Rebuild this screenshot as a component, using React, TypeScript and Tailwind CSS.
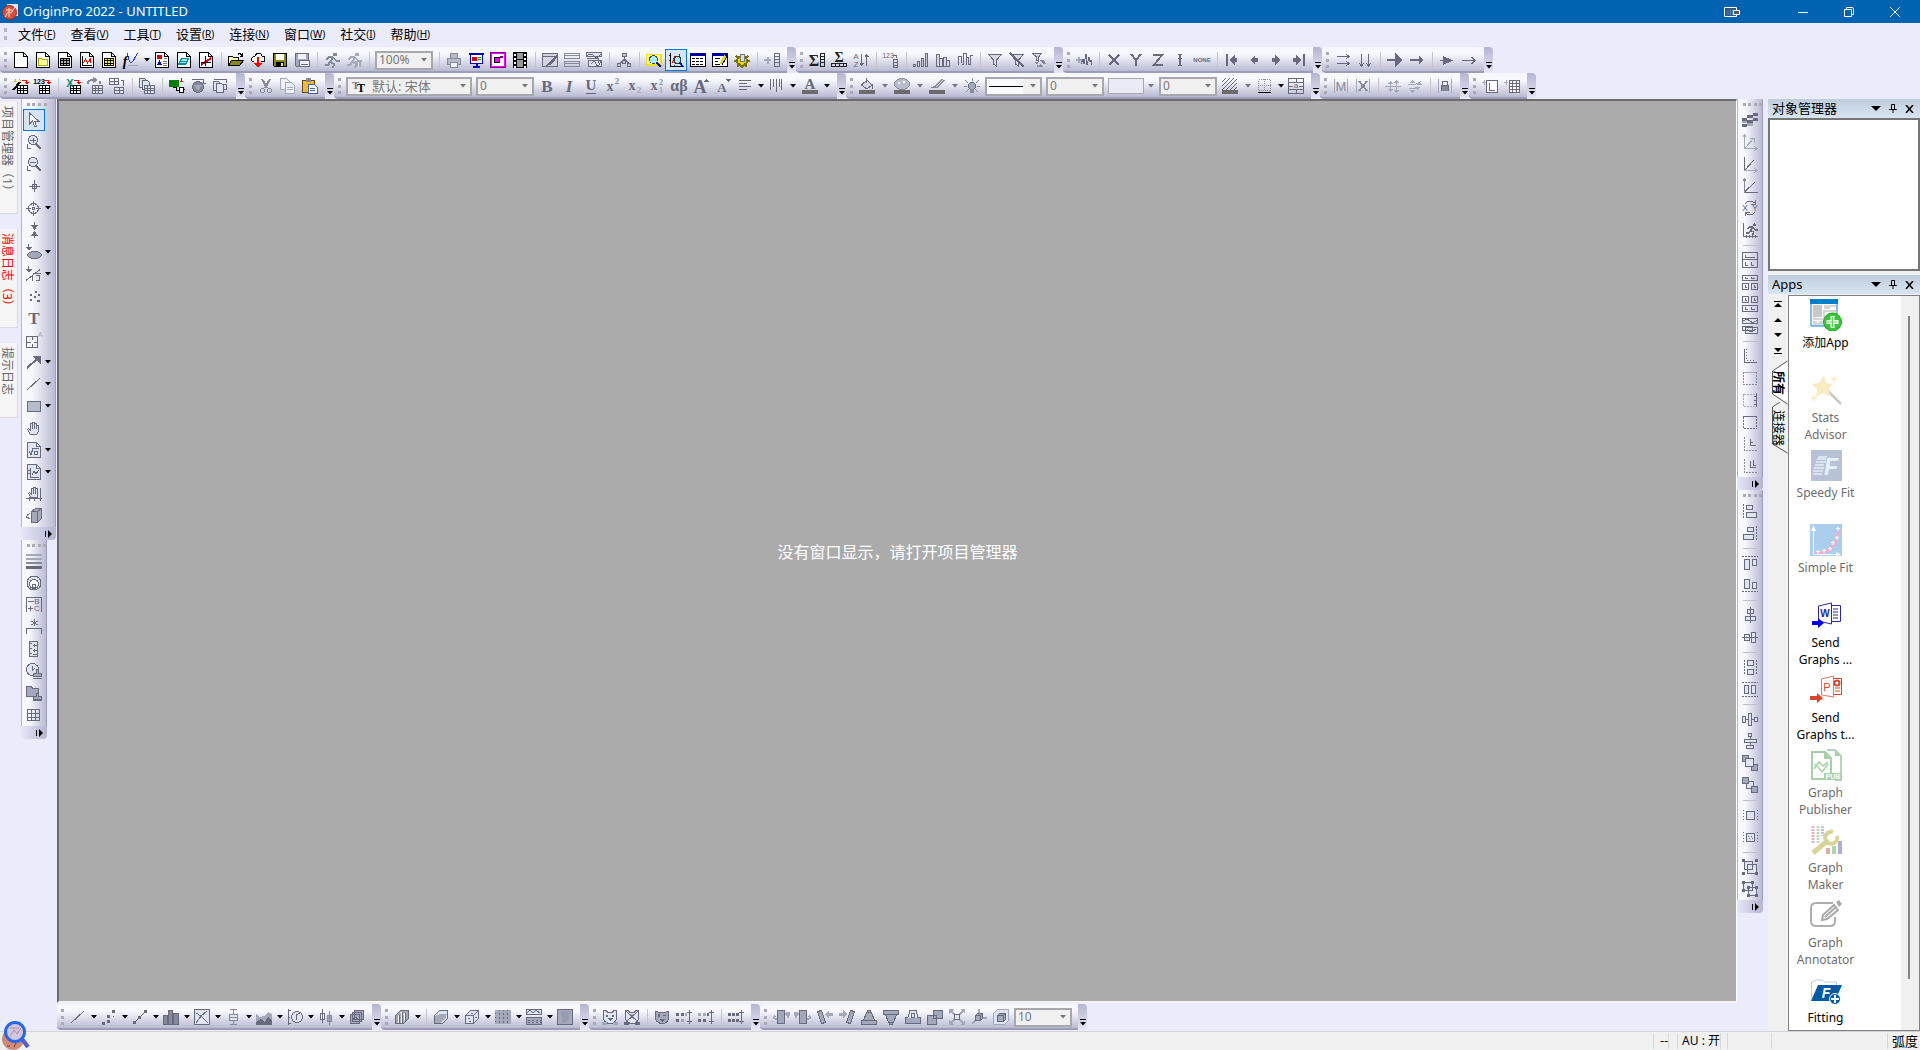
import type { ReactNode } from "react";

const LIGHT = "#a3a8ba";
const PALE = "#dfe4f3";

const txt = (s: string, x: number, y: number, size: number, extra: object = {}) => (
  <text x={x} y={y} fontSize={size} textAnchor="middle" fill="currentColor" stroke="none" fontWeight="bold" fontFamily="Liberation Serif, serif" {...extra}>
    {s}
  </text>
);
const sans = { fontFamily: "Liberation Sans, sans-serif", fontWeight: "normal" };
const line = (d: string, stroke = "currentColor", fill = "none", w = 1) => <path d={d} stroke={stroke} fill={fill} strokeWidth={w} />;
const solid = (d: string, fill = "currentColor") => <path d={d} stroke="none" fill={fill} />;
const page = (inner: ReactNode, stroke = "#000", fill = "#fff") => (
  <>
    {line("M1.5 .5h9l4 4v11h-13zM10.5 .5v4h4", stroke, fill)}
    {inner}
  </>
);
const grid = (x: number, y: number, fill = "#fff", stroke = "currentColor") =>
  line(`M${x}.5 ${y}.5h10v8h-10zM${x}.5 ${y + 3}.5h10M${x}.5 ${y + 5}.5h10M${x + 3}.5 ${y}.5v8M${x + 6}.5 ${y}.5v8`, stroke, fill);
const redHook = line("M9 2.5h4.500v3M11.500 4.500h4M12.500 5.500h2", "#f00");
const sheet = (x: number, y: number) => line(`M${x}.5 ${y}.5h5l2 2v7h-7z`, "currentColor", PALE);
const bin = (rects: string, guide: string) => (
  <>
    {line(rects, "currentColor", PALE)}
    <path d={guide} stroke="currentColor" strokeDasharray="2 1" />
  </>
);
const person = (c: string) => (
  <>
    <circle cx="11" cy="2.500" r="2" fill={c} stroke="none" />
    {line("M9.500 5 6 10l4 2-1 4M9 5 4.500 5 2.500 8M9.500 6l3 3h3M6 10 4 13H.5", c, "none", 2)}
  </>
);

const icons: Record<string, ReactNode> = {
  newProject: page(null),
  newFolder: page(line("M3.500 6.500h3l1 1h5v6h-9z", "#b9a500", "#ffffa0")),
  newBook: page(line("M3.500 6.500h9v7h-9zM3 8.500h10M3 11.500h10M6.500 6v8M9.500 6v8", "#000", "#b5b5b5")),
  newGraph: page(<>{line("M3.500 4v9.500H13", "#000")}{line("M4.500 11l2-4 2 4 3-4v4", "#e00000")}</>),
  newMatrix: page(line("M3.500 6.500h9v7h-9zM3 8.500h10M3 11.500h10M6.500 6v8M9.500 6v8", "#000", "#ff0")),
  fn: <>{line("M4.500 1c1 9 3 11 5.500 8s3-7 5-8", "#3b3bd8")}{txt("f", 2, 14, 14, { fill: "#000", fontStyle: "italic" })}{line("M5 13.500h10", LIGHT)}</>,
  newLayout: page(<>{solid("M3 3h5v4H3z", "#e00000")}{solid("M3 13l2.500-5L8 13z", "#0000d0")}{line("M9 9.500h4M9 11.500h4M9 13.500h4M10 6.500h3", "#777")}</>),
  newNotes: page(line("M5.500 6.500h7l-3 6h-7zM5 9h6M4 11h6", "#008a9a", "#9fe8f0")),
  newFn: page(<>{line("M3 13 13 6", "#e00000", "none", 2)}{line("M7.500 4v10M3 10.500h10", "#000")}</>),
  open: <>{line("M.5 13.500v-9h4l1 1h5v3", "#000", "#ffffa0")}{line("M.5 13.500l3-5h12l-4 5z", "#000", "#8a8a10")}{line("M10 2.500q2-2 4 1M14.500 1v3h-3", "#000")}</>,
  cloud: <>{line("M4 9.500H2.500q-2-2 0-4 1-1 2-1 2-4 5-3 2 0 2.500 2.500 3 0 3 3t-3 2.500H11", "#000", "#fff")}{line("M8 5v8", "#f00", "none", 2)}{solid("M4 11h8l-4 5z", "#f00")}</>,
  save: <>{line("M1.500 1.500h13v13h-12l-1-1z", "#000", "#8a8a10")}{solid("M4 2h8v6H4z", "#fff")}{solid("M4 10h8v5H4z", "#000")}{solid("M9 11h2v3H9z", "#ddd")}</>,
  saveTpl: <>{line("M1.500 1.500h13v13h-12l-1-1z", "currentColor", LIGHT)}{solid("M4 2h8v5H4z", "#eef1fa")}{line("M5.500 8.500h10v6h-10zM7 12.500h7", "currentColor", "#eef1fa")}</>,
  run: person("#858a9b"),
  runStop: <>{person(LIGHT)}<circle cx="12" cy="12" r="3.500" fill={LIGHT} stroke="none" />{line("M12.500 9.500v5", "#fff")}</>,
  print: <>{line("M4.500 6V1.500h7V6M1.500 6.500h13v6h-13z", "#858a9b", "#b6bac9")}{line("M4.500 10.500h7v5h-7z", "#858a9b", "#eef1fa")}</>,
  slide: <>{line("M1 2h15M8.500 12v3M5 15h7", "#0000c0", "none", 2)}{line("M2.500 2.500h12v9h-12z", "#0000c0", "#fff")}<circle cx="6.500" cy="7" r="2.500" fill="#e00000" stroke="none" />{line("M10 5.500h3M10 7.500h3", "#00a000")}</>,
  video: <>{line("M1 1h14v14H1z", "#ff00ff", "#fff", 2)}{line("M.5.5h15v15H.5z", "#800080")}<circle cx="7" cy="8" r="3" fill="#ff00ff" stroke="#000" />{solid("M10 4h3v2h-3z", "#800080")}</>,
  film: <>{solid("M1 0h14v16H1z", "#000")}{solid("M5 1h6v6H5zM5 8h6v7H5z", "#999")}{line("M3 1v15M13 1v15", "#fff", "none", 2)}<path d="M3 0v16M13 0v16" stroke="#000" strokeWidth="2" strokeDasharray="2 2" /></>,
  brush: <>{line("M.5 1.500h15v13H.5zM.5 4.500h15", "currentColor", "#d3d6e2")}{solid("M16 1 8 9l-4 5 6-2 6-8z")}</>,
  tile: line("M.5 1.500h15v5H.5zM.5 9.500h15v5H.5zM1 3.500h14M1 11.500h14", "#858a9b"),
  windows: <>{line("M.5.500h15v4H.5zM2.500 8.500h13v6h-13z", "currentColor", PALE)}{line("M1 4q4-4 7 0t7-2M.5 6.500h12v4M5 12q3-5 5 0t5-3")}</>,
  tree: line("M6.500 1.500h4v3h-4zM8.500 5v2M8.500 7l-5 5M8.500 7l5 5M1.500 11.500h3v3h-3zM6.500 8.500h3v3h-3zM11.500 11.500h3v3h-3z", "currentColor", "#c5c9d6"),
  find: <>{solid("M0 2h16v12H0z", "#f5e100")}{solid("M1 3h13v9H1z", "#fdf7a0")}<circle cx="7.500" cy="7.500" r="4" fill="#a8f0f8" stroke="#444" />{line("M11 11l4 4", "#00c", "none", 2)}</>,
  graphView: <>{line("M2.500 1v13.500H16M1 3.500h2M1 8.500h2M6.500 13v2", "#000", "none")}{line("M4 11l3-7 3 2 2-4", "#e00000")}<circle cx="9.500" cy="8" r="3.500" fill="#a8f0f8" stroke="#333" />{line("M12 11l3 4", "#00c", "none", 2)}</>,
  table: <>{line("M.5 1.500h15v13H.5z", "#000", "#fff")}{solid("M0 1h16v3H0z", "#00009c")}<path d="M2 6.500h12M2 9.500h12M2 12.500h12" stroke="#000" strokeDasharray="3 1" /></>,
  code: <>{line("M.5 1.500h15v13H.5z", "#000", "#fff")}{solid("M0 1h16v3H0z", "#00009c")}{line("M3 6.500h5M3 9.500h3M3 12.500h5", "#000")}{line("M13.500 4 9 12", "#e8d800", "none", 3)}{line("M15 4.500 10 13", "#000")}</>,
  gear: <><circle cx="8" cy="9" r="5" fill="#e8d800" stroke="#7a7000" strokeWidth="2" />{line("M0 9h3M13 9h3M2 4l3 3M14 4l-3 3M3 15l3-3M13 15l-3-3M8 13v3", "#7a7000", "none", 2)}{line("M6.500 2.500h4v7h-4z", "#777", "#ddd")}</>,
  addCol: <>{line("M0 8h7M3.500 4.500v7", LIGHT, "none", 2)}{line("M10.500 1.500h5v13h-5zM10 4.500h6M10 7.500h6M10 10.500h6")}</>,

  sigmaCol: <>{txt("Σ", 5, 14, 16, { fill: "#222" })}{line("M11.500 1.500h4v13h-4zM11 4.500h5M11 7.500h5M11 10.500h5", "#222")}</>,
  sigmaRow: <>{txt("Σ", 8, 10, 14, { fill: "#222" })}{line("M.5 11.500h15v3H.5zM4.500 11v4M8.500 11v4M12.500 11v4", "#222")}</>,
  sortAZ: <>{txt("A", 3, 7, 8, sans)}{txt("Z", 3, 15, 8, sans)}{line("M8.500 2v12M13.500 2v12M7 12.500h3M12 3.500h3M6.500 11.500h4M11.500 4.500h4")}</>,
  seq: <>{txt("123", 5, 6, 7, sans)}{line("M10 3.500h3v2M10.500 7.500h4v8h-4zM10 10.500h5M10 13.500h5")}</>,
  barsUp: line("M.5 12.500h2v2h-2zM4.500 9.500h2v5h-2zM8.500 6.500h2v8h-2zM12.500 1.500h2v13h-2z", "currentColor", "#c5c9d6"),
  bars: line("M1.500 2.500h3v12h-3zM4.500 6.500h3v8h-3zM8.500 5.500h3v9h-3zM11.500 8.500h3v6h-3z", "currentColor", "#d6d9e5"),
  barsMix: line("M1.500 11V4.500h3v6M1.500 8v4h-1M4.500 12.500h2V1.500h3v11M9.500 5.500h2v7h2v-9h2"),
  filter: line("M1.500 2.500h13L9.500 8v6l-3-2V8z", "currentColor", "#d6d9e5"),
  filterOff: <>{line("M1.500 2.500h13L9.500 8v6l-3-2V8z", "currentColor", "#d6d9e5")}{line("M1 1l14 14", "currentColor", "none", 2)}</>,
  filterRe: <>{line("M1.500 1.500h9L7.500 5v4l-2-1V5z", "currentColor", "#d6d9e5")}{solid("M8 8h5l2 4h-3l-2-2zM3 10l4 0-1 5h6l-2-3-3 2z", "#858a9b")}</>,
  wave: <>{line("M0 8h6M3 5v6", LIGHT, "none", 2)}{line("M5 12l2-5 1 5 2-10 1 11 2-8 1 5 1-2v5")}</>,
  axX: line("M3 3l10 10M13 3 3 13", "currentColor", "none", 2),
  axY: line("M3 2l5 6 5-6M8 8v6", "currentColor", "none", 2),
  axZ: line("M3 3h9L4 13h9", "currentColor", "none", 2),
  axI: <>{line("M8 3v10", "currentColor", "none", 2)}{line("M6 2.500h4M6 13.500h4M6 6.500h4")}</>,
  none: txt("NONE", 8, 10, 6, { ...sans, fontWeight: "bold" }),
  first: <>{line("M3 2v12", "currentColor", "none", 2)}{solid("M5 8l6-5v3h2v4h-2v3z")}</>,
  prev: solid("M4 8l5-5v3h3v4H9v3z"),
  next: solid("M12 8 7 3v3H4v4h3v3z"),
  last: <>{line("M14 2v12", "currentColor", "none", 2)}{solid("M12 8 6 3v3H3v4h3v3z")}</>,
  arrowsR: line("M2 4.500h12M11 2l3 2.500L11 7M2 11.500h12M11 9l3 2.500-3 2.500"),
  arrowsD: line("M4.500 2v12M2 11l2.500 3L7 11M11.500 2v12M9 11l2.500 3 2.500-3"),
  arrowBig: <>{line("M0 8h9", "currentColor", "none", 2)}{solid("M8 1v14l8-7z")}</>,
  arrowSmall: <>{line("M1 8h9", "currentColor", "none", 2)}{solid("M10 4v8l5-4z")}</>,
  arrowHead: <>{line("M1 8.500h13")}{solid("M4 4v9l10-4.500z")}</>,
  arrowThin: line("M1 8.500h13M10.500 5l3.500 3.500-3.500 3.500"),

  wand: <>{grid(4, 7, "#fff", "#000")}{line("M0 12 7 4", "#000", "none", 2)}{line("M1 3h3M2.500 1v3M6 1l2 2", "#c9b800")}{redHook}</>,
  imp123: <>{grid(4, 7, "#fff", "#000")}{txt("123", 4, 6, 7, { ...sans, fill: "#000", fontWeight: "bold" })}{redHook}</>,
  excel: <>{grid(5, 7, "#fff", "#000")}{txt("X", 5, 9, 11, { ...sans, fill: "#008c8c", fontWeight: "bold" })}{redHook}</>,
  refreshGrid: <>{grid(5, 7, PALE)}{line("M1 6q0-4 4-4h3M6 0l3 2-3 2M13 3v3", "#858a9b", "none", 2)}</>,
  gridLink: <>{line("M.5.5h9v6h-9zM.5 3.500h9M5.500 .5v6M12 2.500h2v5")}{line("M5.500 9.500h9v6h-9zM5.500 12.500h9M10.500 9.500v6", "currentColor", PALE)}</>,
  copyGrid: <>{sheet(0, 0)}{sheet(3, 2)}{grid(5, 7, PALE)}</>,
  plug: <>{solid("M0 2h10v7H0z", "#008000")}{line("M12.500 0v4M11 3.500h3", "#f00")}{line("M4 9.500h3.500v3H10M10.500 9.500h4v5h-4zM15 11.500h1", "#000", "#fff")}</>,
  db: <><circle cx="7" cy="9" r="5.500" fill="#858a9b" stroke="currentColor" />{solid("M3 7h8l-4 6z", LIGHT)}{line("M1 1.500h11v3M11 5.500h4")}</>,
  copies: <>{sheet(0, 3)}{sheet(3, 5)}{line("M1 1.500h12v3M9.500 6.500h4v5h-4")}</>,
  cut: <>{line("M4 1l5 9M12 1 7 10", "#858a9b", "none", 2)}<circle cx="4.500" cy="12.500" r="2" stroke="#858a9b" /><circle cx="11.500" cy="12.500" r="2" stroke="#858a9b" /></>,
  copy: <>{line("M.5.5h6l3 3v8h-9z", LIGHT, "#eef1fa")}{line("M5.500 4.500h6l3 3v8h-9zM7 9.500h6M7 11.500h6", "#a3a8ba", "#eef1fa")}</>,
  paste: <>{line("M.5 2.500h12v12H.5z", "#6b4a00", "#f0b840")}{solid("M4 0h5v4H4z", "#888")}{line("M6.500 6.500h6l3 3v6h-9zM8 10.500h5M8 12.500h5", "#4060a0", "#fff")}</>,

  bold: txt("B", 8, 14, 17),
  italic: txt("I", 8, 14, 17, { fontStyle: "italic" }),
  underline: <>{txt("U", 8, 12, 15)}{line("M3 15.500h10")}</>,
  sup: <>{txt("x", 5, 13, 14)}{txt("2", 12, 6, 9, { fill: "#858a9b" })}</>,
  sub: <>{txt("x", 5, 12, 14)}{txt("2", 12, 15, 9, { fill: LIGHT })}</>,
  supsub: <>{txt("x", 5, 12, 14)}{txt("2", 12, 7, 8, { fill: "#858a9b" })}{txt("1", 12, 15, 8, { fill: LIGHT })}</>,
  greek: txt("αβ", 8, 13, 16),
  bigger: <>{txt("A", 7, 15, 18)}{solid("M11 4h5l-2.500-3z")}</>,
  smaller: <>{txt("A", 7, 14, 13)}{solid("M11 1h5l-2.500 3z")}</>,
  align: line("M2 2.500h12M2 5.500h8M2 8.500h12M2 11.500h8"),
  valign: line("M2.500 1v11M5.500 1v8M8.500 1v13M11.500 1v8M13.500 1v11"),
  fontColor: <>{txt("A", 8, 11, 15)}{solid("M0 12h16v4H0z", "#6b6b6b")}</>,
  bucket: <>{line("M2.500 7 8 2l5 5-5 4zM7.500 0v5M13.500 6v5", "currentColor", "#d6d9e5")}{solid("M0 12h16v4H0z", "#6b6b6b")}</>,
  palette: <><ellipse cx="8" cy="6" rx="7.500" ry="5.500" fill="#b9bdcb" stroke="#858a9b" /><circle cx="5" cy="5" r="1.500" fill="#fff" stroke="none" /><circle cx="10" cy="4" r="1.500" fill="#fff" stroke="none" />{solid("M0 12h16v4H0z", "#6b6b6b")}</>,
  pen: <>{line("M13.500 1 6 8.500l-4 1M15.500 2 8 9.500l-5 0", "#858a9b")}{solid("M0 12h16v4H0z", "#6b6b6b")}</>,
  bulb: <><circle cx="8" cy="8" r="3.500" fill={LIGHT} stroke="currentColor" />{line("M8.500 0v3M1 2l3 3M15 2l-3 3M0 8.500h3M13 8.500h3M2 14l3-3M14 14l-3-3", "#858a9b")}{solid("M6 11h4v4H6z", "#858a9b")}</>,
  hatch: <>{line("M0 4l4-4M0 8l8-8M0 12 12 0M4 12 15 1M8 12l7-7M12 12l3-3", "currentColor", "none", 1)}{solid("M0 12h16v4H0z", "#6b6b6b")}</>,
  border: <><path d="M1.500 1.500h12v11h-12zM7.500 1v12M1 7.500h13" stroke="#858a9b" strokeDasharray="1 1" />{line("M1 14.500h13", "#000")}</>,
  merge: <>{line("M.5.5h15v15H.5zM1 4.500h15M1 11.500h15M8.500 0v4M8.500 12v4M1 8.500h4M11 8.500h5")}{txt("a", 8, 10, 8, sans)}</>,
  maskM: <>{line("M1.500 1v14M14.500 1v14", LIGHT)}{txt("M", 8, 13, 13, { ...sans, fill: "#858a9b" })}</>,
  maskX: <>{line("M1.500 1v14M14.500 1v14", LIGHT)}{line("M4 3l8 10M12 3 4 13", "#858a9b", "none", 2)}</>,
  spread: <>{line("M5.500 4v9M11.500 3v10M0 8.500h16", LIGHT)}{solid("M3 6h5L5.500 3zM3 11h5l-2.500 3zM9 5h5l-2.500-3zM9 12h5l-2.500 3z", LIGHT)}</>,
  spread2: <>{line("M1 6.500h7l6-3M2 10.500h8", LIGHT)}{solid("M3 5h5L5.500 2zM3 12h5l-2.500 3zM9 7h6l-3-3zM8 9h5l-2.500 3z", LIGHT)}</>,
  lock: <>{line("M1.500 1v14M14.500 1v14", LIGHT)}{line("M5.500 7V3.500h5V7M4.500 7.500h7v5h-7z", "currentColor", "none")}{solid("M5 8h6v5H5z", "#858a9b")}</>,
  addFrame: <>{line("M0 4.500h4M2.500 2v5", LIGHT)}{line("M4.500 2.500h11v12h-11z", "currentColor", "#fff")}{line("M7.500 5v7H13")}</>,
  addGrid: <>{line("M0 4.500h4M2.500 2v5", LIGHT)}{line("M5.500 2.500h10v12h-10zM5.500 5.500h10M5.500 8.500h10M5.500 11.500h10M8.500 2.500v12M12.500 2.500v12", "currentColor", "#fff")}</>,

  pointer: line("M3.500 1v11l3-3 2 5h2l-2-5h4z", "currentColor", "#fff"),
  zoomIn: <><circle cx="7" cy="6" r="4.500" fill={PALE} stroke="currentColor" />{line("M4 6.500h6M7.500 4v5")}{line("M10 10l5 5", "currentColor", "none", 2)}{line("M1.500 10v4.500H5")}</>,
  zoomOut: <><circle cx="7" cy="6" r="4.500" fill={PALE} stroke="currentColor" />{line("M4 6.500h6")}{line("M10 10l5 5", "currentColor", "none", 2)}{line("M1.500 10v4.500H5")}</>,
  cross: line("M8.500 2v12M3 8.500h11M6.500 6.500h4v4h-4z"),
  target: <><circle cx="7.500" cy="8.500" r="5" stroke="currentColor" /><circle cx="7.500" cy="8.500" r="1" stroke="currentColor" />{line("M7.500 1v5M7.500 11v5M0 8.500h5M10 8.500h5")}</>,
  squeeze: <>{line("M8.500 0v5M8.500 11v5")}{solid("M5 3h7L8.500 8zM5 14h7L8.500 9z")}</>,
  pickEllipse: <><ellipse cx="8.500" cy="11" rx="7" ry="3.500" fill={LIGHT} stroke="currentColor" />{line("M2.500 0v5")}{solid("M0 3h6L3 7z")}</>,
  pickCurve: <>{line("M2.500 0v5")}{solid("M0 3h6L3 7z")}{line("M0 14.500 14 3.500M6.500 9v6M9.500 9.500h4v5h-4M7 7.500h8")}</>,
  dots: solid("M4 6h2v2H4zM9 3h2v2H9zM8 8h2v2H8zM12 6h2v2h-2zM4 11h2v2H4zM11 12h3v2h-3z"),
  text: txt("T", 8, 14, 17),
  tableText: <>{line("M.5 4.500h11v11H.5zM.5 10.500h4M8 10.500h4M6.500 4.500v3M6.500 12v3")}{txt("A", 14, 5, 7, { ...sans, fill: LIGHT })}</>,
  arrow: <>{line("M1 14 11 5", "currentColor", "none", 2)}{solid("M6 2h9v9z")}</>,
  slash: line("M1 14 14 2", "currentColor", "none", 1),
  rect: line("M1.500 3.500h13v10h-13z", "currentColor", "#b5bccb"),
  hand: line("M4.500 14.500 1.500 9.500l1-1 2 2V3.500h2V8.500 2.500h2v6-5h2v5-3h2v6l-2 3z", "currentColor", PALE),
  formula: <>{page(null, "currentColor", PALE)}{line("M3 9.500l2 3 2-6h6M8.500 9.500h3v3h-3z")}</>,
  graphObj: <>{page(null, "currentColor", PALE)}{line("M4.500 4v9.500H13M2 6.500h2M2 9.500h2M6 11l2-4 2 3 3-4")}</>,
  handAxis: <>{line("M5 11.500 2.500 7.500l1-1 2 2V2.500h2v5-6h2v6-5h2v9z", "currentColor", PALE)}{line("M0 12.500h16M14.500 2v13M3.500 11v4M8.500 12v3")}</>,
  cube: <>{line("M5.500 3.500l4-3h6v10l-4 4h-6z", "currentColor", LIGHT)}{line("M5.500 3.500h6v11M11.500 3.500l4-3M4 5.500q-4 1-3 4l3 1")}</>,
  lines: <>{solid("M0 1h16v2H0z", LIGHT)}{solid("M0 5h16v2H0z", LIGHT)}{solid("M0 9h16v2H0z", "#858a9b")}{solid("M0 13h16v3H0z")}</>,
  radio: <><circle cx="8" cy="8" r="7" fill={PALE} stroke="currentColor" /><circle cx="8" cy="9" r="4.500" fill="#fff" stroke="currentColor" /><circle cx="8" cy="11" r="2" stroke="currentColor" /></>,
  legend: <>{line("M.5 15V.5h15V15M2 4.500h6M2 11.500h5M4.500 9v5")}{txt("B", 11, 7, 8, sans)}{txt("C", 11, 14, 8, sans)}</>,
  star: <>{line("M8.500 0v7M5 2l7 4M12 2 5 6M.5 15V9.500h15V15")}</>,
  vlegend: <>{line("M3.500.5h8v15h-8z", "currentColor", PALE)}{line("M7 4.500h4M8.500 3v3M7 9.500h4M8.500 8v3M7 13.500h4M4 2.500h2M4 7.500h2M4 12.500h2")}</>,
  clock: <><circle cx="6.500" cy="6.500" r="6" fill={PALE} stroke="currentColor" />{line("M6.500 3v4L9 5")}{line("M10.500 6v4h-3v3h8v-3h-3V6zM7 15.500h9", "currentColor", LIGHT)}</>,
  folderStamp: <>{line("M.5 1.500h5l1 2h6v8H.5z", "currentColor", LIGHT)}{line("M10.500 8v3h-3v3h8v-3h-3V8zM7 15.500h9", "currentColor", LIGHT)}</>,
  gridBox: line("M1.500 2.500h12v11h-12zM1 6.500h13M1 10.500h13M5.500 3v11M9.500 3v11"),

  stairs: <>{solid("M5 3h6v3H5zM11 1h5v3h-5zM0 6h5v3H0zM5 8h6v3H5zM11 6h5v3h-5zM0 12h5v3H0z")}{solid("M5 11h6v3H5zM0 9h5v2H0z", LIGHT)}</>,
  axA: line("M2.500 15V1M.5 3.500 2.500 1l2 2.500M2 14.500h13M12.500 12.500l2.500 2-2.500 2M3 14 12 4M8 4.500h4v4", LIGHT),
  axB: <>{line("M2.500 1v13.500L12 4")}{line("M2 14.500h13M12.500 12.500l2.500 2-2.500 2", LIGHT)}</>,
  axC: <>{line("M2.500 14.500h13M2.500 14 13 4")}{line("M2.500 15V1M.5 3.500 2.500 1l2 2.500", "#858a9b")}</>,
  swapXY: <>{line("M3 4q4-5 10-1M13.500 0v4H9M13 12q-4 5-10 1M3.500 16v-4h4")}{txt("X", 3, 11, 9, sans)}{txt("Y", 13, 11, 9, sans)}</>,
  rescale: <>{line("M1.500 1v13.500H16M4.500 13v3M7.500 13v3M10.500 13v3M13.500 13v3")}<g transform="translate(4 1) scale(.75)">{person("#666a7c")}</g></>,
  layA: line("M.5.5h15v15H.5zM1 7.500h15M3.500 3v2.500H13M3.500 10v3.500H6M9.500 10v3.500H12"),
  layB: line("M.5 1.500h15v5H.5zM3.500 3v1.500H6M9.500 3v1.500H13M.5 9.500h6v6h-6zM9.500 9.500h6v6h-6zM3.500 11v2.500H5M12.500 11v2.500H14"),
  layC: line("M.5.5h6v6h-6zM9.500.5h6v6h-6zM3.500 2v2.500H5M12.500 2v2.500H14M.5 9.500h15v6H.5zM3.500 11v2.500H6M9.500 11v2.500H13"),
  layD: <>{line("M.5.5h15v5H.5zM.5 8.500h10v4H.5zM3.500 9.500h12v6h-12z", "currentColor", PALE)}{line("M1 3q4-3 7 0t7-1M5 11q3 5 9 0")}</>,
  axisL: <>{line("M2.500 1v13.500H15")}<path d="M4.500 1v11M5 12.500h9" stroke="currentColor" strokeDasharray="1 2" /></>,
  axisT: <>{line("M1 2.500h14", LIGHT)}<path d="M1.500 2v12.500h13V2" stroke="#858a9b" strokeDasharray="2 1" /></>,
  axisR: <><path d="M1.500 2.500h13v12h-13z" stroke={LIGHT} strokeDasharray="2 1" />{line("M14.500 1v14M12 4.500h2M12 8.500h2M12 12.500h2")}</>,
  axisBox: <><path d="M1.500 2.500h13v12h-13z" stroke="currentColor" strokeDasharray="2 1" />{line("M1 2.500h14", "currentColor")}</>,
  inset: <><path d="M2.500 1v13.500H15" stroke="#858a9b" strokeDasharray="2 1" />{line("M8.500 3v6.500H14M8 6.500h3")}</>,
  inset2: <><path d="M2.500 1v13.500H15" stroke="#858a9b" strokeDasharray="2 1" />{line("M8.500 3v6.500H14M11.500 2v5H14")}</>,
  alL: bin("M4.500 2.500h6v4h-6zM4.500 9.500h10v5h-10z", "M1.500 1v15"),
  alR: bin("M5.500 2.500h6v4h-6zM1.500 9.500h10v5h-10z", "M14.500 1v15"),
  alT: bin("M2.500 4.500h5v10h-5zM10.500 4.500h4v6h-4z", "M0 1.500h16"),
  alB: bin("M2.500 2.500h5v9h-5zM10.500 5.500h4v6h-4z", "M0 14.500h16"),
  alV: line("M5.500 2.500h6v4h-6zM3.500 9.500h10v4h-10zM8.500 0v16", "currentColor", PALE),
  alH: line("M2.500 5.500h5v6h-5zM9.500 3.500h4v10h-4zM0 8.500h16", "currentColor", PALE),
  szW: bin("M5.500 1.500h6v5h-6zM5.500 10.500h6v5h-6z", "M2.500 1v15M14.500 1v15"),
  szH: bin("M2.500 4.500h4v8h-4zM9.500 4.500h4v8h-4z", "M0 1.500h16M0 15.500h16"),
  diH: line("M.5 5.500h3v6h-3zM6.500 2.500h3v12h-3zM12.500 6.500h3v4h-3zM4 8.500h2M10 8.500h2", "currentColor", PALE),
  diV: line("M6.500.5h3v3h-3zM2.500 6.500h12v3h-12zM4.500 12.500h7v3h-7zM8.500 4v2M8.500 10v2", "currentColor", PALE),
  front: <>{line("M.5.5h6v6h-6zM9.500 9.500h6v6h-6z", "currentColor", LIGHT)}{line("M3.500 3.500h8v8h-8z", "currentColor", PALE)}</>,
  back: <>{line("M4.500 4.500h7v7h-7z", "currentColor", PALE)}{line("M.5.5h6v6h-6zM9.500 9.500h6v6h-6z", "currentColor", LIGHT)}</>,
  groupA: <>{line("M4.500 4.500h8v8h-8z", "currentColor", PALE)}<path d="M1.500 3v12M15.500 3v12" stroke="currentColor" strokeDasharray="1 2" /></>,
  groupB: <>{line("M4.500 4.500h8v8h-8z", "currentColor", PALE)}<path d="M1.500 3v12M15.500 3v12M6 7.500h6M7 9.500h6" stroke="currentColor" strokeDasharray="1 2" /></>,
  grp: <>{line("M2.500 2.500h8v8h-8zM5.500 5.500h9v9h-9z", "currentColor", PALE)}{solid("M0 0h3v3H0zM13 0h3v3h-3zM0 13h3v3H0zM13 13h3v3h-3z")}</>,
  ungrp: <>{line("M1.500 1.500h9v8h-9zM6.500 6.500h8v8h-8z", "currentColor", PALE)}{solid("M0 0h3v3H0zM9 0h3v3H9zM0 8h3v3H0zM5 5h3v3H5zM13 5h3v3h-3zM5 13h3v3H5zM13 13h3v3h-3z")}</>,

  pScatter: solid("M1 13h3v3H1zM6 6h3v3H6zM11 1h3v3h-3zM12 7h1v1h-1zM6 11h3v3H6z"),
  pLineSym: <>{line("M2 14 14 2")}{solid("M1 12h3v3H1zM6 7h3v3H6zM12 1h3v3h-3z")}</>,
  pCol: line("M.5 6.500h4v9h-4zM5.500 1.500h4v14h-4zM10.500 4.500h5v11h-5z", "currentColor", "#858a9b"),
  pMap: <>{line("M.5.5h15v15H.5z", "currentColor", PALE)}{line("M2 14l5-7 7 7M2 4l5 3 6-5")}</>,
  pBox: <>{line("M8.500 0v16M5 .5h7M5 15.500h7", "#858a9b")}{line("M4.500 5.500h8v6h-8zM4.500 8.500h8", "#858a9b", PALE)}</>,
  pArea: <>{solid("M0 5l4 3 4-1 4-4 4 2v11H0z", LIGHT)}{solid("M0 13l5-3 4 3 3-5 4 3v5H0z")}</>,
  pPolar: <><circle cx="10" cy="8" r="5.500" fill={PALE} stroke="currentColor" />{line("M1.500 0v16M1 1.500h3M1 8.500h2M1 14.500h3M9.500 11V6l3-2")}</>,
  pCandle: <>{line("M4.500 0v14M2.500 4.500h4v6h-4z", "currentColor", "#fff")}{line("M11.500 2v14M9.500 6.500h4v6h-4z", "#858a9b", LIGHT)}</>,
  pStack: <>{line("M5.500 1.500h9v9h-9zM3.500 3.500h9v9h-9zM1.500 5.500h9v9h-9z", "currentColor", LIGHT)}{line("M3.500 7v5.500H9M4 10.500l2-2 3 1")}</>,
  p3dBar: <>{line("M1.500 6.500l5-5h8v8l-5 5h-8z", "currentColor", LIGHT)}{line("M4.500 6v8M7.500 3v11M10.500 4v8M6 3.500h2M9 5.500h3", "#fff")}{line("M5.500 6v8M8.500 3v11M11.500 4v8")}</>,
  p3dSurf: <>{line("M1.500 6.500l5-5h8v8l-5 5h-8z", "currentColor", PALE)}{solid("M2 7l5-2h7l-2 5-5 4H2z", LIGHT)}</>,
  p3dDots: <>{line("M1.500 6.500l5-5h8v8l-5 5h-8zM1.500 6.500h8v8M9.500 6.500l5-5", "currentColor", PALE)}{line("M4 9.500h2M7 4.500h2M11 8.500h2M5 12.500h2")}</>,
  pContour: <>{solid("M0 1h16v14H0z", LIGHT)}<path d="M0 4.500h16M0 8.500h16M0 12.500h16M4.500 1v14M8.500 1v14M12.500 1v14" stroke="currentColor" strokeDasharray="1 3" /></>,
  pHeat: <>{line("M.5.5h15v5H.5z", "currentColor", PALE)}{line("M1 4l3-3 3 3 3-3 4 3")}{line("M.5 8.500h15v7H.5z", "currentColor", LIGHT)}<path d="M2 11.500h13M2 13.500h13" stroke="currentColor" strokeDasharray="2 2" /></>,
  pImage: <>{line("M.5.5h15v15H.5z", "currentColor", LIGHT)}{solid("M4 2h8v9l-4 3H5z", "#979caf")}</>,
  maskA: <>{line("M1.500 1.500h3l1 2h5l1-2h3v9q-2 4-6.500 4T1.500 10z", "currentColor", PALE)}{solid("M4 6h2v2H4zM10 6h2v2h-2zM5 9h6l-3 3z")}{solid("M0 13h5v3H0zM11 13h5v3h-5z", LIGHT)}</>,
  maskB: <>{line("M1.500 1.500h3l1 2h5l1-2h3v9q-2 4-6.500 4T1.500 10z", "currentColor", PALE)}{line("M2 2l12 11M14 2 2 13")}{solid("M0 13h5v3H0zM11 13h5v3h-5z")}</>,
  maskC: <>{line("M1.500 2.500q6 2 13 0v8q-2 4-6.500 4T1.500 10z", "currentColor", LIGHT)}{solid("M4 5h2v3H4zM9 6h3v1H9zM5 10h6l-3 3z")}</>,
  rowsA: <>{solid("M0 4h3v3H0zM5 4h3v3H5zM0 10h3v3H0z")}{solid("M5 10h3v3H5zM9 4h2v3H9z", LIGHT)}{line("M13.500 1v14M11 3.500h5M11 12.500h5")}</>,
  rowsB: <>{solid("M0 10h3v3H0zM5 10h3v3H5zM9 4h2v3H9z")}{solid("M0 4h3v3H0zM5 4h3v3H5z", LIGHT)}{line("M13.500 1v14M11 3.500h5M11 12.500h5")}</>,
  rowsC: <>{solid("M0 4h3v3H0zM4 4h3v3H4zM8 4h3v3H8zM0 10h3v3H0zM4 10h3v3H4zM8 10h3v3H8z")}{line("M13.500 1v14M11 3.500h5M11 12.500h5")}</>,
  rotA: <>{line("M5 10q-6 0-3-3M11 5q5 0 4 4M13 4h3v3", LIGHT, "none", 2)}{line("M4.500 1.500h7v13h-7z", "currentColor", LIGHT)}</>,
  rotB: <>{line("M11 10q6 0 3-3M5 5q-5 0-4 4M3 4H0v3", LIGHT, "none", 2)}{line("M4.500 1.500h7v13h-7z", "currentColor", LIGHT)}</>,
  tiltA: <>{line("M.5 2.500l4-1 4 12-4 1z", "currentColor", LIGHT)}{solid("M8 5l4-4v3h4v3h-4v3z", LIGHT)}</>,
  tiltB: <>{line("M15.500 2.500l-4-1-4 12 4 1z", "currentColor", LIGHT)}{solid("M8 5 4 1v3H0v3h4v3z", LIGHT)}</>,
  perspA: line("M.5 11.500h15v4H.5zM2.500 11.500l3-8h5l3 8M6.500 3V1.500h3V3", "currentColor", LIGHT),
  perspB: line("M.5 1.500h15v4H.5zM2.500 5.500l3 8h5l3-8M6.500 13.500v2h3v-2", "currentColor", LIGHT),
  perspC: <>{line("M.5 8.500h15v6H.5z", "currentColor", LIGHT)}{line("M3 8.500l2-7h6l2 7M6.500 4.500h3v4h-3z", "currentColor", PALE)}</>,
  perspD: line("M6.500 1.500h9v8h-9zM.5 6.500h9v9h-9z", "currentColor", LIGHT),
  fit: <>{solid("M0 0h5L0 5zM16 0h-5l5 5zM0 16h5l-5-5zM16 16h-5l5-5z", LIGHT)}{line("M2 2l12 12M14 2 2 14", LIGHT, "none", 2)}{line("M5.500 5.500h5v5h-5z", "currentColor", PALE)}</>,
  cubeAxis: <>{line("M8 0v8l8 1M8 8l-7 7", LIGHT, "none", 2)}{line("M4.500 6.500l2-2h5v5l-2 2h-5zM4.500 6.500h5v5M9.500 6.500l2-2", "currentColor", LIGHT)}</>,
  cubeFrame: <>{line("M.5 4.500l4-4h11v11l-4 4H.5z", LIGHT, PALE)}{line("M4.500 6.500l2-2h6v6l-2 2h-6zM4.500 6.500h6v6M10.500 6.500l2-2", "currentColor", LIGHT)}</>,
};

const Icon = ({ name }: { name: string }) => (
  <svg viewBox="0 0 16 16" className="size-4 shrink-0 overflow-visible" fill="none" shapeRendering="crispEdges" aria-hidden="true">
    {icons[name]}
  </svg>
);

const Caret = ({ dim = false }: { dim?: boolean }) => (
  <svg viewBox="0 0 6 4" className={`h-1 w-1.5 shrink-0 ${dim ? "text-[#74757c]" : "text-black"}`} aria-hidden="true">
    <path d="M0 0h6L3 3.500z" fill="currentColor" />
  </svg>
);

const ACTIVE = "graphView pointer".split(" ");

const dropWidths: Record<string, string> = { s: "w-[5px]", n: "w-[9px]", w: "w-[13px]", b: "w-3" };

// token: "name" or "name:x" with a drop arrow (s small, n narrow, b wide, w wide and dimmed), "|" separator
const Tools = ({ list, vertical = false }: { list: string; vertical?: boolean }) => (
  <>
    {list.split(" ").map((token, i) => {
      if (token === "|") {
        return vertical ? (
          <div key={i} className="flex h-2 items-center px-1"><div className="h-px w-full bg-[#bfc0c8]" /></div>
        ) : (
          <div key={i} className="flex w-2 items-center justify-center"><div className="h-4 w-px bg-[#c3c3c9]" /></div>
        );
      }
      const [name, drop] = token.split(":");
      const on = ACTIVE.includes(name);
      return (
        <div key={i} className="flex shrink-0 items-center">
          <button
            aria-label={name}
            className={`flex size-[22px] shrink-0 items-center justify-center border ${on ? "border-[#0078d7] bg-[#d4e6f6]" : "border-transparent"}`}
          >
            <Icon name={name} />
          </button>
          {drop && (
            <button aria-label={`${name} ▾`} className={`flex h-5 items-center justify-center ${dropWidths[drop]}`}>
              <Caret dim={drop === "w"} />
            </button>
          )}
        </div>
      );
    })}
  </>
);

const Bar = ({ children }: { children: ReactNode }) => (
  <div role="toolbar" className="flex h-[26px] shrink-0 text-[#666a7c]">
    <div className="flex items-center rounded-l-sm border-b-2 border-[#9a9cb8] bg-linear-to-b from-[#f6f8fe] from-30% to-[#b9bbd2] pt-0.5">
      <div className="flex w-2.5 justify-center">
        <div className="h-4 w-0 border-l-3 border-dotted border-[#a9aab4]" />
      </div>
      {children}
      <div className="w-1" />
    </div>
    <button aria-label="工具栏选项" className="flex w-[9px] flex-col items-center justify-end gap-0.5 rounded-r-sm bg-linear-to-b from-[#b4b6d0] to-[#e6e7f8] pb-1">
      <span className="h-px w-1.5 bg-black" />
      <Caret />
    </button>
  </div>
);

const VBar = ({ list, width }: { list: string; width: string }) => (
  <div role="toolbar" className={`flex shrink-0 flex-col text-[#666a7c] ${width}`}>
    <div className="border-x border-l-[#b4b5c6] border-r-[#9a9cb8] bg-linear-to-r from-[#f6f8fe] from-30% to-[#b9bbd2] pl-px">
      <div className="flex h-2.5 items-center pl-1">
        <div className="w-5 border-t-3 border-dotted border-[#a9aab4]" />
      </div>
      <Tools list={list} vertical />
    </div>
    <button aria-label="工具栏选项" className="flex h-[13px] items-center justify-end rounded-b-sm bg-linear-to-r from-[#e6e7f8] to-[#b4b6d0] pr-1">
      <svg viewBox="0 0 7 8" className="h-2 w-[7px]"><path d="M0 1h1v6H0zM3 0l4 4-4 4z" fill="#000" /></svg>
    </button>
  </div>
);

const Combo = ({ label, value, width, children }: { label: string; value: string; width: string; children?: ReactNode }) => (
  <div className={`relative mx-0.5 h-[19px] shrink-0 ${width}`}>
    <select
      aria-label={label}
      className={`block size-full appearance-none border-2 border-[#a7a8ab] bg-[#f0f0f0] leading-none text-[#777] ${children ? "pl-6 text-[13px]" : "pl-0.5 text-xs"}`}
    >
      <option>{value}</option>
    </select>
    {children}
    <div className="pointer-events-none absolute inset-y-0 right-1.5 flex items-center"><Caret dim /></div>
  </div>
);

const menus = [
  ["文件", "F"], ["查看", "V"], ["工具", "T"], ["设置", "R"],
  ["连接", "N"], ["窗口", "W"], ["社交", "I"], ["帮助", "H"],
];

const AppIcon = ({ children }: { children: ReactNode }) => (
  <svg viewBox="0 0 32 32" className="size-8" fill="none" aria-hidden="true">{children}</svg>
);

const apps = [
  {
    name: "添加App", on: true,
    icon: (
      <>
        <path d="M1 4v23h26V4" fill="#fff" stroke="#0080c8" />
        <path d="M0 0h28v5H0z" fill="#0080c8" />
        <path d="M3 6h9v12H3z" fill="#c8c8c8" />
        <path d="M14 7h12M14 9h6M14 12h12v6H14zM3 20h10M3 23h4M9 23h4M3 25h10" stroke="#c8c8c8" strokeWidth="1.500" />
        <circle cx="22.500" cy="23" r="9" fill="#39c439" stroke="#1ba51b" />
        <path d="M22.500 17v12M16.500 23h12" stroke="#fff" strokeWidth="4" />
        <path d="M22.500 18v10M17.500 23h10" stroke="#5ad85a" strokeWidth="1" />
      </>
    ),
  },
  {
    name: "Stats Advisor", on: false,
    icon: (
      <>
        <path d="M16 15l15 15" stroke="#c8c8cc" strokeWidth="2.500" />
        <path d="M14 1l2 8 7 1-5 5 3 8-8-4-7 4 1-8-6-5 8-1z" fill="#f8ecc0" />
        <path d="M24 1l1 3 3 1-3 1-1 3-1-3-3-1 3-1zM4 20l1 3 3 1-3 1-1 3-1-3-3-1 3-1z" fill="#f8ecc0" />
      </>
    ),
  },
  {
    name: "Speedy Fit", on: false,
    icon: (
      <>
        <path d="M1 1h31v31H1z" fill="#b8c2d6" />
        <path d="M8 8h9M7 10h9M6 13h10M5 16h9M4 19h10M3 22h10M3 25h9" stroke="#e6eef8" strokeWidth="1.500" />
        <text x="21" y="26" fontSize="23" fontStyle="italic" fontWeight="bold" textAnchor="middle" fill="#e4f2fc" fontFamily="Liberation Sans, sans-serif">F</text>
      </>
    ),
  },
  {
    name: "Simple Fit", on: false,
    icon: (
      <>
        <path d="M0 0h32v32H0z" fill="#abceec" />
        <path d="M3.500 31V4M3 30.500h26" stroke="#fff" />
        <path d="M1 7l2.500-6L6 7zM26 28l5 2.500-5 1.500z" fill="#fff" />
        <path d="M5 29Q26 30 29 4" stroke="#f7a8d0" strokeWidth="2.500" />
        <path d="M6 27.500h4M8 26v4M12 26.500h4M14 25v4M18 24.500h4M20 23v4M21 18.500h4M23 17v4M25 13.500h4M27 12v4M26 4.500h4M28 3v4" stroke="#fff" />
      </>
    ),
  },
  {
    name: "Send Graphs ...", on: true,
    icon: (
      <>
        <path d="M8.500 7l13-3v21l-13-3z" fill="#fff" stroke="#2a2a9c" />
        <path d="M22 6.500h8.500v16H22M23 10h5M23 13h5M23 16h5M23 19h5" stroke="#2a2a9c" />
        <text x="15" y="18" fontSize="10" fontWeight="bold" textAnchor="middle" fill="#2a2a9c" fontFamily="Liberation Sans, sans-serif">W</text>
        <path d="M2 22h6v-3l6 5-6 5v-3H2z" fill="#0000f0" />
      </>
    ),
  },
  {
    name: "Send Graphs t...", on: true,
    icon: (
      <>
        <path d="M11.500 5l12-3v21l-12-2z" fill="#fff" stroke="#e07860" />
        <path d="M24 4.500h7.500v16H24M25 14h5M25 17h5" stroke="#d84428" />
        <circle cx="27" cy="9" r="2.500" stroke="#d84428" strokeWidth="2" />
        <text x="17" y="17" fontSize="11" textAnchor="middle" fill="#d84428" fontFamily="Liberation Sans, sans-serif">P</text>
        <path d="M0 22h7v-3l6 5-6 5v-3H0z" fill="#d84428" />
      </>
    ),
  },
  {
    name: "Graph Publisher", on: false,
    icon: (
      <>
        <path d="M17 1h8l6 6v24h-6" stroke="#b4d6b4" strokeWidth="2" />
        <path d="M2 3h13l6 6v21H2z" fill="#fff" stroke="#a8d0a8" strokeWidth="2" />
        <path d="M14 3v7h7zM25 1v6h6z" fill="#a8d0a8" />
        <path d="M4 20l5-7 4 4 5-4M4 15l4 3 4 5 6-8" stroke="#a8d0a8" strokeWidth="1.500" />
        <path d="M14 24h18v7H14z" fill="#a8d0a8" />
        <text x="23" y="30" fontSize="7" fontWeight="bold" textAnchor="middle" fill="#fff" fontFamily="Liberation Sans, sans-serif">PUB</text>
      </>
    ),
  },
  {
    name: "Graph Maker", on: false,
    icon: (
      <>
        <path d="M3 2v18" stroke="#e8b0b8" strokeWidth="3" strokeDasharray="2 1" />
        <path d="M8 2v18" stroke="#b8dcb8" strokeWidth="3" strokeDasharray="2 1" />
        <path d="M12.500 2v10" stroke="#c0c0e8" strokeWidth="3" strokeDasharray="2 1" />
        <path d="M3 29l14-12" stroke="#d8d498" strokeWidth="5" />
        <path d="M27 12a6 6 0 1 1-4-4" stroke="#d8d498" strokeWidth="4" />
        <path d="M16 24h4v6h-4z" fill="#e0a8b0" />
        <path d="M22 22h4v8h-4z" fill="#a8d8a8" />
        <path d="M28 17h4v13h-4z" fill="#b0acd8" />
      </>
    ),
  },
  {
    name: "Graph Annotator", on: false,
    icon: (
      <>
        <path d="M23 4H6Q1 4 1 9v13q0 5 5 5h14q5 0 5-5v-4" stroke="#aeaeae" strokeWidth="2" />
        <path d="M13 16 24 6l4 5-11 9-5 1z" fill="#fff" stroke="#aaa" strokeWidth="2" />
        <path d="M15 18 26 8" stroke="#aaa" strokeWidth="2" />
        <path d="M26 3l3-2 3 4-3 3z" fill="#aaa" />
      </>
    ),
  },
  {
    name: "Fitting", on: true,
    icon: (
      <g transform="translate(0 4)">
        <path d="M1.500 21V4l5-2h6l2 2h12v5" fill="#fff" stroke="#b8cfe4" />
        <path d="M8 7h24l-7 16H1z" fill="#005aa5" />
        <text x="16" y="20" fontSize="14" fontWeight="bold" fontStyle="italic" textAnchor="middle" fill="#fff" fontFamily="Liberation Sans, sans-serif">F</text>
        <circle cx="25" cy="21" r="5.500" fill="#005aa5" stroke="#fff" />
        <path d="M25 17v8M21 21h8" stroke="#fff" strokeWidth="2" />
      </g>
    ),
  },
];

const PanelHeader = ({ title }: { title: string }) => (
  <div className="flex h-[19px] shrink-0 items-center bg-linear-to-b from-[#bfcddb] to-[#d7e4f2] pr-0.5 pl-1 text-black">
    <h2 className="flex-1 text-[13px] leading-none">{title}</h2>
    <button aria-label="选项" className="px-1"><svg viewBox="0 0 10 5" className="h-[5px] w-2.5"><path d="M0 0h10L5 5z" /></svg></button>
    <button aria-label="固定" className="px-1"><svg viewBox="0 0 8 9" className="h-[9px] w-2" fill="none" stroke="#000"><path d="M2.500 5V.5h3V5M0 5.500h8M4 6v3M5.500 0v5" /></svg></button>
    <button aria-label="关闭" className="px-1"><svg viewBox="0 0 9 8" className="h-2 w-[9px]" stroke="#000" strokeWidth="1.500"><path d="M1 0l7 8M8 0 1 8" /></svg></button>
  </div>
);

const logs = [
  { name: "项目管理器（1）", style: "h-28 text-[#666]" },
  { name: "消息日志（3）", style: "h-[99px] text-[#f00]" },
  { name: "提示日志", style: "h-[75px] text-[#666]" },
];

export default function App() {
  return (
    <div className="relative flex h-screen flex-col overflow-hidden bg-[#ebecfb] font-['Noto_Sans','Noto_Sans_CJK_SC',sans-serif] text-black">
      <header className="flex h-[23px] shrink-0 items-center bg-[#0063b1] pr-0.5 text-white">
        <svg viewBox="0 0 16 16" className="mx-0.5 size-4" fill="none">
          <path d="M5 0h11v12H5z" fill="#dfe6f5" />
          <circle cx="7.500" cy="8.500" r="7" fill="#d94f3c" stroke="#9c2a1c" />
          <path d="M3 13l3-5 3 1 4-6M4 6h6M7 4v9" stroke="#ffe0d8" />
        </svg>
        <h1 className="ml-[3px] flex-1 text-[13px] leading-none">OriginPro 2022 - UNTITLED</h1>
        <button aria-label="屏幕" className="mr-10">
          <svg viewBox="0 0 16 12" className="h-3 w-4" fill="none"><path d="M.5 1.500h12v9H.5z" stroke="#fff" fill="#35577a" /><path d="M4 4v5M6.500 4v5M8.500 4v5" stroke="#4d88c0" /><path d="M9.500 4.500h6v4h-6z" stroke="#fff" fill="#555" /></svg>
        </button>
        <button aria-label="最小化" className="flex w-[46px] justify-center"><svg viewBox="0 0 10 10" className="size-2.5" stroke="#fff"><path d="M0 5.500h10" /></svg></button>
        <button aria-label="还原" className="flex w-[46px] justify-center"><svg viewBox="0 0 10 10" className="size-2.5" fill="none" stroke="#fff"><path d="M.5 2.500h7v7h-7zM2.500 2V.5H8q1.500 0 1.500 1.500v5.500H8" /></svg></button>
        <button aria-label="关闭" className="flex w-[46px] justify-center"><svg viewBox="0 0 10 10" className="size-2.5" stroke="#fff"><path d="M0 0l10 10M10 0 0 10" /></svg></button>
      </header>

      <nav className="flex h-6 shrink-0 items-center gap-[15px] pb-0.5 pl-1">
        <div className="-mr-1 h-3 border-l-3 border-dotted border-[#b5b6c2]" />
        {menus.map(([name, key]) => (
          <button key={name} className="flex items-center text-[13px] leading-none">
            {name}
            <span className="text-[10px]">(<u>{key}</u>)</span>
          </button>
        ))}
      </nav>

      <div className="flex shrink-0">
        <Bar>
          <Tools list="newProject newFolder newBook newGraph newMatrix fn:n newLayout newNotes newFn | open cloud save saveTpl | run runStop |" />
          <Combo label="缩放" value="100%" width="w-[58px]" />
          <Tools list="| print slide video film | brush tile windows | tree | find graphView table code gear | addCol" />
        </Bar>
        <Bar><Tools list="sigmaCol sigmaRow sortAZ | seq | barsUp bars barsMix | filter filterOff filterRe" /></Bar>
        <Bar><Tools list="wave | axX axY axZ axI none | first prev next last" /></Bar>
        <Bar><Tools list="arrowsR arrowsD | arrowBig arrowSmall | arrowHead arrowThin" /></Bar>
      </div>

      <div className="flex shrink-0">
        <Bar><Tools list="wand imp123 | excel refreshGrid gridLink | copyGrid | plug db copies" /></Bar>
        <Bar><Tools list="cut copy paste" /></Bar>
        <Bar>
          <Combo label="字体" value="默认: 宋体" width="w-[126px]">
            <svg viewBox="0 0 14 14" className="pointer-events-none absolute top-0.5 left-1.5 size-3.5 overflow-visible">
              <text x="0" y="10" fontSize="11" fontWeight="bold" fill="#777" fontFamily="Liberation Serif, serif">T</text>
              <text x="5" y="13" fontSize="12" fontWeight="bold" fill="#000" fontFamily="Liberation Serif, serif">T</text>
            </svg>
          </Combo>
          <Combo label="字号" value="0" width="w-[58px]" />
          <Tools list="bold italic underline sup sub supsub greek bigger smaller align:n valign:b fontColor:b" />
        </Bar>
        <Bar>
          <Tools list="bucket:w palette:w pen:w bulb" />
          <Combo label="线型" value="" width="w-[57px]">
            <div className="pointer-events-none absolute inset-y-0.5 left-0.5 flex w-9 items-center bg-[#f8fbfe] pl-0.5"><div className="h-px w-full bg-black" /></div>
          </Combo>
          <Combo label="线宽" value="0" width="w-[58px]" />
          <button aria-label="填充颜色" className="ml-0.5 h-4 w-9 border border-[#a7a8b4] bg-[#e9ebf5]" />
          <button aria-label="填充颜色 ▾" className="flex w-[13px] justify-center"><Caret dim /></button>
          <Combo label="图案宽度" value="0" width="w-[58px]" />
          <Tools list="hatch:w border:n merge" />
        </Bar>
        <Bar><Tools list="maskM maskX | spread spread2 | lock" /></Bar>
        <Bar><Tools list="addFrame addGrid" /></Bar>
      </div>

      <div className="flex min-h-0 flex-1">
        <aside className="flex w-[57px] shrink-0">
          <div className="flex w-[21px] flex-col gap-[15px] pt-[3px]">
            {logs.map((log) => (
              <button key={log.name} className={`flex w-[18px] items-center justify-start border-r border-b border-[#d8d8e0] bg-[#f5f5f5] pt-1 pr-1 text-xs leading-none [text-orientation:sideways] [writing-mode:vertical-rl] ${log.style}`}>
                {log.name}
              </button>
            ))}
          </div>
          <div className="flex flex-col">
            <VBar width="w-[35px]" list="pointer zoomIn zoomOut cross target:s squeeze pickEllipse:s pickCurve:s dots text tableText arrow:s slash:s rect:s hand formula:s graphObj:s handAxis cube" />
            <VBar width="w-[26px]" list="lines radio legend star vlegend clock folderStamp gridBox" />
          </div>
        </aside>

        <main className="flex min-w-0 flex-1 flex-col">
          <div className="mr-[31px] flex flex-1 items-center justify-center border-t-2 border-r border-b-2 border-l-2 border-t-[#6b6b6b] border-r-white border-b-[#f4f4f4] border-l-[#6b6b6b] bg-[#ababab]">
            <p className="pt-0.5 text-base text-white">没有窗口显示，请打开项目管理器</p>
          </div>
          <div className="flex h-7 shrink-0 pt-px">
            <Bar><Tools list="slash:n pScatter:n pLineSym:n pCol:n pMap:n pBox:n pArea:n pPolar:n pCandle:n pStack" /></Bar>
            <Bar><Tools list="p3dBar:n | p3dSurf:n p3dDots:n pContour:n pHeat:n pImage" /></Bar>
            <Bar><Tools list="maskA maskB | maskC rowsA rowsB | rowsC" /></Bar>
            <Bar>
              <Tools list="rotA rotB tiltA tiltB perspA perspB perspC perspD fit cubeAxis cubeFrame" />
              <Combo label="旋转角度" value="10" width="w-[58px]" />
            </Bar>
          </div>
        </main>

        <div className="-ml-[31px] flex w-[31px] shrink-0 flex-col">
          <VBar width="w-[26px]" list="stairs axA axB axC swapXY rescale | layA layB layC layD | axisL axisT axisR axisBox inset inset2" />
          <VBar width="w-[26px]" list="alL alR | alT alB | alV alH | szW szH | diH diV front back | groupA groupB | grp ungrp" />
        </div>

        <aside className="flex w-[152px] shrink-0 flex-col bg-[#f0f0f0]">
          <PanelHeader title="对象管理器" />
          <div className="h-[153px] shrink-0 border-2 border-[#767676] bg-white" />
          <div className="h-1 shrink-0" />
          <PanelHeader title="Apps" />
          <div className="mt-px flex min-h-0 flex-1">
            <div className="flex w-5 shrink-0 flex-col items-center">
              <div className="flex h-[65px] flex-col items-center justify-around">
                <button aria-label="顶部"><svg viewBox="0 0 8 6" className="block h-1.5 w-2"><path d="M0 0h8v1H0zM4 2l4 4H0z" /></svg></button>
                <button aria-label="上移"><svg viewBox="0 0 8 4" className="block h-1 w-2"><path d="M4 0l4 4H0z" /></svg></button>
                <button aria-label="下移"><svg viewBox="0 0 8 4" className="block h-1 w-2"><path d="M4 4l4-4H0z" /></svg></button>
                <button aria-label="底部"><svg viewBox="0 0 8 6" className="block h-1.5 w-2"><path d="M0 5h8v1H0zM4 4l4-4H0z" /></svg></button>
              </div>
              <button className="relative h-[46px] w-5 text-xs font-bold [text-orientation:sideways] [writing-mode:vertical-rl]">
                <svg viewBox="0 0 20 46" className="absolute inset-0 size-full" fill="none" stroke="#555"><path d="M19.500 1 4.500 11v23l15 10" fill="#fff" /></svg>
                <span className="relative pr-0.5 leading-none">所有</span>
              </button>
              <button className="relative -mt-1 h-[52px] w-5 text-xs [text-orientation:sideways] [writing-mode:vertical-rl]">
                <svg viewBox="0 0 20 52" className="absolute inset-0 size-full" fill="none" stroke="#555"><path d="M12 0 4.500 5v37l15 9" /></svg>
                <span className="relative pr-0.5 leading-none">连接器</span>
              </button>
            </div>
            <div className="flex flex-1 border border-[#808080]">
              <ul className="min-w-0 flex-1 overflow-hidden bg-white pt-[3px]">
                {apps.map((app) => (
                  <li key={app.name} className="h-[75px]">
                    <button className={`flex w-[73px] flex-col items-center text-xs leading-[17px] ${app.on ? "text-black" : "text-[#6d6d6d]"}`}>
                      <AppIcon>{app.icon}</AppIcon>
                      <span className="mt-[3px] w-[62px] text-center">{app.name}</span>
                    </button>
                  </li>
                ))}
              </ul>
              <div className="flex w-[18px] justify-center pt-5 pr-0.5 pb-[51px]"><div className="w-0.5 bg-[#858585]" /></div>
            </div>
          </div>
        </aside>
      </div>

      <footer className="flex h-[19px] shrink-0 items-center justify-end border-t border-[#d2d2d8] bg-[#f0f0f0] text-xs leading-4">
        <span className="mr-2 w-4 border-x border-[#d7d7d7] text-right">--</span>
        <span className="mr-1.5 border-x border-[#d7d7d7] pl-1 whitespace-nowrap">AU : 开</span>
        <span className="h-4 w-11 border-l border-[#d7d7d7]" />
        <span className="h-4 w-[116px] border-l border-[#d7d7d7]" />
        <span className="border-l border-[#d7d7d7] pr-0.5 pl-1 text-[13px]">弧度</span>
      </footer>

      <svg viewBox="0 0 28 30" className="absolute bottom-0 left-0.5 h-[30px] w-7" fill="none" aria-hidden="true">
        <circle cx="11" cy="19" r="11" fill="#cf8a78" />
        <path d="M5 26h3M12 27l2-4" stroke="#7a3a2c" />
        <circle cx="13" cy="12" r="9.500" fill="#d4c6dd" stroke="#2468f0" strokeWidth="3" />
        <path d="M8 16l4-6 3 4 4-6M8 8h9" stroke="#a88ba8" />
        <path d="M20 19l6 8" stroke="#4a5ad8" strokeWidth="4" />
      </svg>
    </div>
  );
}
